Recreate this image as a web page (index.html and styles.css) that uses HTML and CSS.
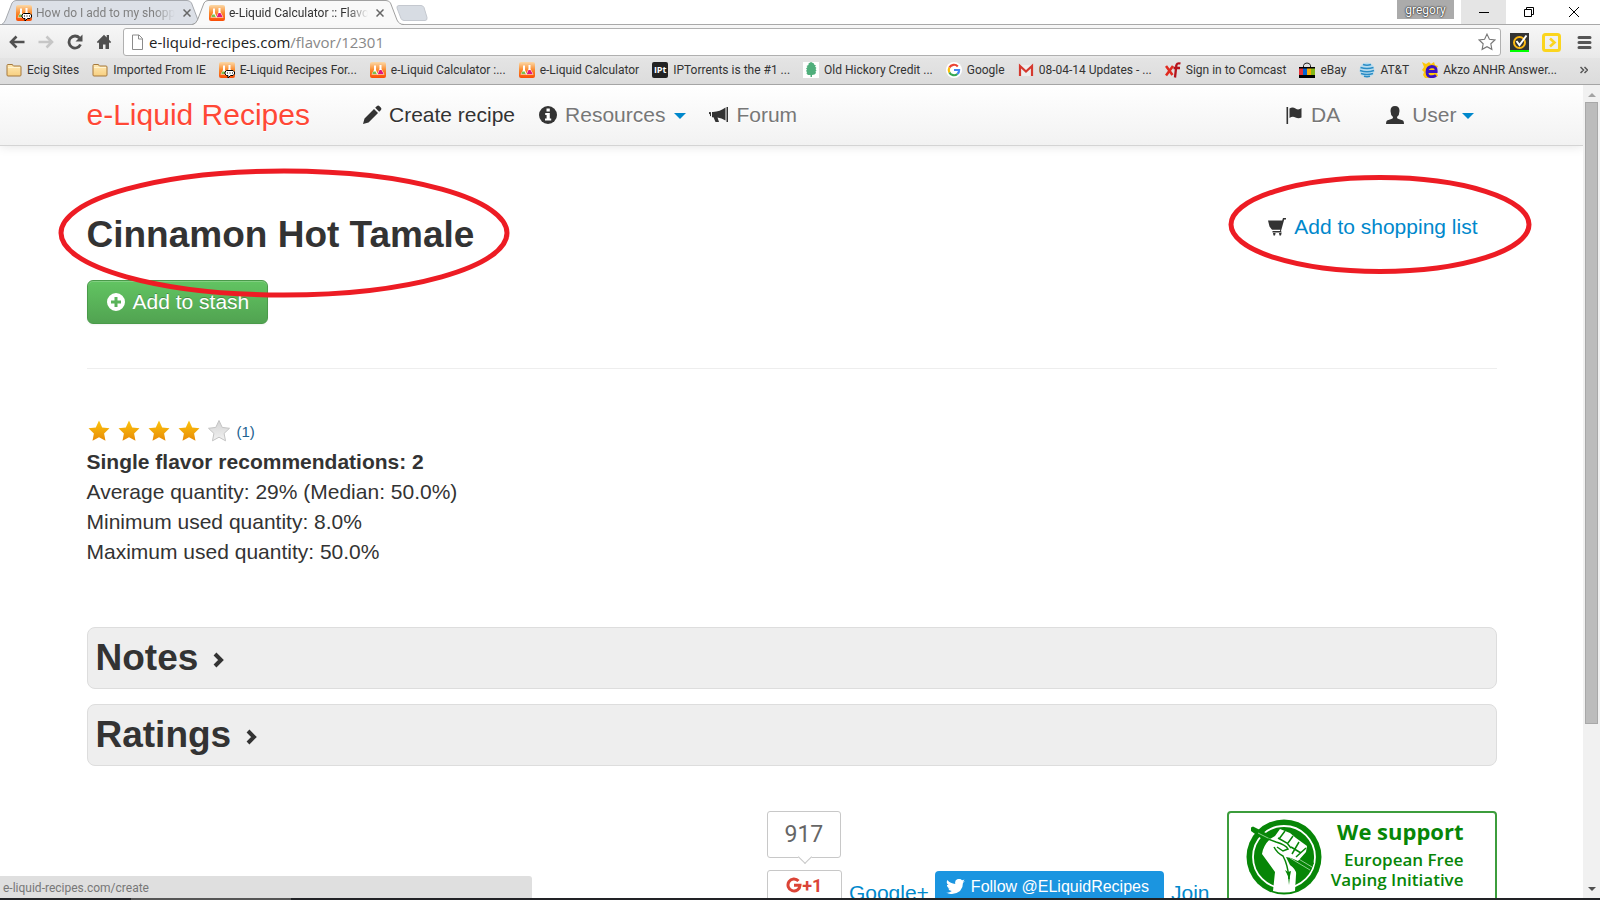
FILE: index.html
```html
<!DOCTYPE html>
<html lang="en">
<head>
<meta charset="utf-8">
<title>e-Liquid Calculator :: Flavor</title>
<link rel="stylesheet" href="styles.css">
</head>
<body>
<svg class="defs" aria-hidden="true">
  <defs>
    <linearGradient id="orange" x1="0" y1="0" x2="0" y2="1"><stop offset="0" stop-color="#fbd9a8"/><stop offset=".5" stop-color="#fb8a2c"/><stop offset="1" stop-color="#fa4d06"/></linearGradient>
    <linearGradient id="gold" x1="0" y1="0" x2="0" y2="1"><stop offset="0" stop-color="#fcc40c"/><stop offset="1" stop-color="#e88b08"/></linearGradient>
    <linearGradient id="silver" x1="0" y1="0" x2="0" y2="1"><stop offset="0" stop-color="#d4d4d4"/><stop offset="1" stop-color="#f2f2f2"/></linearGradient>
    <linearGradient id="paper" x1="0" y1="0" x2="0" y2="1"><stop offset="0" stop-color="#ffe9b4"/><stop offset="1" stop-color="#f7cf80"/></linearGradient>
  </defs>
  <symbol id="flask" viewBox="0 0 16 16">
    <rect width="16" height="16" rx="2" fill="url(#orange)"/>
    <path d="M4 3.500h2v4.500l2 4.500H1.500L4 8z" fill="#fff"/><path d="M3.200 9.500h2.500l1 2.500H2.300z" fill="#7cc04c"/>
    <path d="M9.500 3h2v4l3 5.500H7L9.500 7z" fill="#fff"/><path d="M9.500 8h2l2.200 4H7.800z" fill="#e0187c"/>
  </symbol>
  <symbol id="flask-talk" viewBox="0 0 16 16">
    <use href="#flask"/>
    <path d="M7.500 8.500h6.500l1.500 1.500v2l-1.500 1.500h-2.500L9 16v-2.500H7.500L6 12v-2z" fill="#fff" stroke="#000"/>
    <path d="M8 11h1M10.500 11h1M13 11h1" stroke="#000"/>
  </symbol>
  <symbol id="folder" viewBox="0 0 16 16">
    <path d="M1 13V3.500q0-1 1-1h4q1 0 1 1l.5.500H14q1 0 1 1v8q0 1-1 1H2q-1 0-1-1z" fill="url(#paper)" stroke="#a5793c"/>
    <path d="M2 5.500h12" stroke="#fff3cf"/>
  </symbol>
  <symbol id="star" viewBox="0 0 24 24">
    <path d="M12 1.500l3.200 6.900 7.300.9-5.400 5.100 1.400 7.400-6.500-3.600-6.500 3.600 1.400-7.400L1.500 9.300l7.300-.9z"/>
  </symbol>
</svg>

<header class="browser">
  <div class="tabstrip">
    <div class="tab tab-back">
      <svg class="tab-shape" viewBox="0 0 202 25" preserveAspectRatio="none"><path d="M1.500 24.500Q4 23.500 5.500 20L12 3Q13.500.5 16 .5H187Q190 .5 191.500 3L198 20Q199 24 202 24.500z" fill="#dce0e7" stroke="#a6a9ae"/></svg>
      <svg class="i16"><use href="#flask-talk"/></svg>
      <span class="tab-title">How do I add to my shopp</span>
      <button class="tab-close" aria-label="Close tab"><svg viewBox="0 0 8 8"><path d="M.5.5l7 7M7.500.5l-7 7"/></svg></button>
    </div>
    <div class="tab tab-front">
      <svg class="tab-shape" viewBox="0 0 212 25" preserveAspectRatio="none"><path d="M0 25Q4 24.500 5.500 20L12 3Q13.500.5 16 .5H194Q197 .5 198.500 3L205 20Q207 24.500 212 25z" fill="#f9f9f9"/><path d="M0 24.500Q4 24 5.500 20L12 3Q13.500.5 16 .5H194Q197 .5 198.500 3L205 20Q207 24.500 212 24.500" fill="none" stroke="#a0a0a0"/></svg>
      <svg class="i16"><use href="#flask"/></svg>
      <span class="tab-title">e-Liquid Calculator :: Flavo</span>
      <button class="tab-close" aria-label="Close tab"><svg viewBox="0 0 8 8"><path d="M.5.5l7 7M7.500.5l-7 7"/></svg></button>
    </div>
    <button class="newtab" aria-label="New tab"><svg viewBox="0 0 32 16"><path d="M3 .5h22q2 0 3 2l3 10q.5 3-2 3H8q-2 0-3-2L1 3Q.5.5 3 .5z" fill="#d7dce3" stroke="#c4c8cf"/></svg></button>
    <div class="window-controls">
      <button class="profile">gregory</button>
      <button class="win win-min" aria-label="Minimize"><svg viewBox="0 0 10 10"><path d="M0 5.500h10"/></svg></button>
      <button class="win" aria-label="Restore"><svg viewBox="0 0 10 10"><path d="M.5 2.500h7v7h-7zM2.500 2.500v-2h7v7h-2"/></svg></button>
      <button class="win" aria-label="Close"><svg viewBox="0 0 10 10"><path d="M0 0l10 10M10 0L0 10"/></svg></button>
    </div>
  </div>

  <div class="toolbar">
    <button class="tool" aria-label="Back"><svg viewBox="0 0 16 16"><path d="M15.500 8H2M7.500 2.500L2 8l5.500 5.500" stroke="#505050" stroke-width="2.600" fill="none"/></svg></button>
    <button class="tool" aria-label="Forward"><svg viewBox="0 0 16 16"><path d="M.5 8H14M8.500 2.500L14 8l-5.500 5.500" stroke="#c6c6c6" stroke-width="2.600" fill="none"/></svg></button>
    <button class="tool" aria-label="Reload"><svg viewBox="0 0 16 16"><path d="M13.500 10.500A6 6 0 1 1 12.500 4" stroke="#505050" stroke-width="2.800" fill="none"/><path d="M15.500.5v7h-7z" fill="#505050"/></svg></button>
    <button class="tool" aria-label="Home"><svg viewBox="0 0 16 16"><path d="M8 .8L.8 8l1.200 1.200L3 8.300V15h4v-4.500h2.500V15H13V8.300l1 .9L15.200 8 13 5.800V1h-2.300v2.500z" fill="#505050"/></svg></button>
    <div class="omnibox">
      <svg class="i16 page-icon" viewBox="0 0 16 16"><path d="M3.500 1h6.500l3.500 3.500V15.500H3.500zM9.500 1v4h4" fill="#fff" stroke="#8b8b8b"/></svg>
      <div class="url" role="textbox" aria-label="Address">e-liquid-recipes.com<span class="path">/flavor/12301</span></div>
      <button class="fav" aria-label="Bookmark this page"><svg viewBox="0 0 24 24"><use href="#star"/></svg></button>
    </div>
    <button class="ext" aria-label="Safety extension"><svg viewBox="0 0 19 19"><path d="M0 0h19v17H0z" fill="#333"/><path d="M0 17h19v2H0z" fill="#0f0"/><circle cx="9.500" cy="9.500" r="5.500" fill="none" stroke="#fdb913" stroke-width="2"/><path d="M6.500 8l3 4L16.500 2.500" fill="none" stroke="#fff" stroke-width="2"/></svg></button>
    <button class="ext ext-yellow" aria-label="Toolbar extension"><svg viewBox="0 0 19 19"><rect x="1.500" y="1.500" width="16" height="16" rx="2" fill="none" stroke="#fbd51e" stroke-width="3"/><path d="M8 5.500l4.500 4-4.500 4" fill="none" stroke="#fbd51e" stroke-width="2.600"/></svg></button>
    <button class="ext" aria-label="Menu"><svg viewBox="0 0 19 19"><path d="M5 4.500h11M5 9.500h11M5 14.500h11" stroke="#555" stroke-width="3" stroke-linecap="round"/></svg></button>
  </div>

  <nav class="bookmarks" aria-label="Bookmarks">
    <a href="#"><svg class="i16"><use href="#folder"/></svg>Ecig Sites</a>
    <a href="#"><svg class="i16"><use href="#folder"/></svg>Imported From IE</a>
    <a href="#"><svg class="i16"><use href="#flask-talk"/></svg>E-Liquid Recipes For...</a>
    <a href="#"><svg class="i16"><use href="#flask"/></svg>e-Liquid Calculator :...</a>
    <a href="#"><svg class="i16"><use href="#flask"/></svg>e-Liquid Calculator</a>
    <a href="#"><span class="ipt">IPt</span>IPTorrents is the #1 ...</a>
    <a href="#"><svg class="i16" viewBox="0 0 16 16"><path d="M0 0h16v16H0z" fill="#fff"/><path d="M8 0l3 1.500v1l2 1-1 1 1.500 1.500-1 1 1 1.500-1 1 .5 1.500-1.500 1.500-2.500.5v2H7.500v-2L5 13l-1.500-1.500.5-1.500-1-1 1-1.500-1-1L4.500 5l-1-1 2-1v-1.500z" fill="#4fae7b"/></svg>Old Hickory Credit ...</a>
    <a href="#"><svg class="i16" viewBox="0 0 16 16"><circle cx="8" cy="8" r="8" fill="#fff"/><g fill="none" stroke-width="2.200"><path d="M11.800 4.400A5.200 5.200 0 0 0 3.400 5.600" stroke="#ea4335"/><path d="M3.400 5.600a5.200 5.200 0 0 0 0 4.800" stroke="#fbbc05"/><path d="M3.400 10.400a5.200 5.200 0 0 0 8 1.600" stroke="#34a853"/><path d="M11.400 12a5 5 0 0 0 1.700-4H8" stroke="#4285f4"/></g></svg>Google</a>
    <a href="#"><svg class="i16" viewBox="0 0 16 16"><path d="M1 3h14v11H1z" fill="#eee"/><path d="M2 14V4l6 5.500L14 4v10" fill="none" stroke="#d5392f" stroke-width="2.200"/></svg>08-04-14 Updates - ...</a>
    <a href="#"><svg class="i16" viewBox="0 0 16 16"><path d="M1 4l6.500 9M8 4L1 13.500" stroke="#e02b20" stroke-width="2.600"/><path d="M15.500 1.500q-4-1-4.200 2.500l-1.300 11.500M8.500 6h6.500" stroke="#b5121b" stroke-width="2.300" fill="none"/></svg>Sign in to Comcast</a>
    <a href="#"><svg class="i16" viewBox="0 0 16 16"><path d="M4.500 6V3.500Q5 1 8 1t3.500 2.500V6" fill="none" stroke="#222"/><path d="M0 5h16v11H0z"/><path d="M0 6.500h4v6.500H0z" fill="#e53238"/><path d="M4 6.500h4v6.500H4z" fill="#0064d2"/><path d="M8 6.500h4v6.500H8z" fill="#f5af02"/><path d="M12 6.500h4v6.500h-4z" fill="#86b817"/></svg>eBay</a>
    <a href="#"><svg class="i16" viewBox="0 0 16 16"><circle cx="8" cy="8" r="7.500" fill="#b9dcef"/><path d="M4 2.500q4 1.500 8 0M1.500 5.500q6.500 2 13 0M1 8.500q7 2.500 14 0M2 11.500q6 2 12 0M5 14.300q3 .7 6 0" fill="none" stroke="#2a8cc4" stroke-width="1.500"/></svg>AT&amp;T</a>
    <a href="#"><svg class="i16" viewBox="0 0 16 16"><path d="M0 0l4 2 3-2 2 2 3-2 1 3 3 1-2 4 2 6-5 2H3l-2-3 1-3-2-2 2-3z" fill="#fdc70c"/><path d="M5 9.500h9.200Q14.500 4.500 9.800 4.500 5 5 5 10t5 4.700q2.500 0 4-1.500" fill="none" stroke="#3b12c4" stroke-width="2.800"/></svg>Akzo ANHR Answer...</a>
    <button class="more" aria-label="More bookmarks"><svg viewBox="0 0 8 8"><path d="M.5 1l3 3-3 3M4.500 1l3 3-3 3"/></svg></button>
  </nav>
</header>

<div class="viewport">
  <div class="page">
    <div class="navbar">
      <div class="container nav-row">
        <a class="brand" href="#">e-Liquid Recipes</a>
        <a class="nav-link active" href="#"><svg class="glyph" viewBox="0 0 20 20"><path d="M1 19l1.500-5.500L12 4l4 4-9.500 9.500zM13.200 2.800L15 1q1.300-1 2.500.2L18.800 2.500q1.200 1.200.2 2.500L17.200 6.800z"/></svg>Create recipe</a>
        <a class="nav-link" href="#"><svg class="glyph" viewBox="0 0 20 20"><circle cx="10" cy="10" r="9"/><path d="M8.500 3.500h3.300v3H8.500zM7.200 8h4.600v5.500h1.400v2H7v-2h1.600V10H7.200z" fill="#fff"/></svg>Resources<span class="caret"></span></a>
        <a class="nav-link" href="#"><svg class="glyph" viewBox="0 0 20 20"><path d="M17.500 2h1.500v15h-1.500zM4 7q7-.5 12.500-4.500v13Q12.500 13 8.500 12.500L10 17H6.500L4.500 12.300H3V7zM0 7l2 .3v4L1 11V9.200L0 9z"/></svg>Forum</a>
        <a class="nav-link push" href="#"><svg class="glyph" viewBox="0 0 20 20"><path d="M2.500 2h1.600v17H2.500zM5.500 3.500q3-2 6 0t6-.5v9.500q-3 1.500-6 0t-6 .5z"/></svg>DA</a>
        <a class="nav-link user" href="#"><svg class="glyph" viewBox="0 0 20 20"><path d="M10 1q4.500 0 4.500 5 0 4-2.500 6 0 1.500 1 1.800l5 1.700q1 .5 1 3.500H1q0-3 1-3.500l5-1.700q1-.3 1-1.800-2.500-2-2.500-6 0-5 4.500-5z"/></svg>User<span class="caret caret-near"></span></a>
      </div>
    </div>

    <main class="container">
      <div class="headline">
        <div>
          <h1>Cinnamon Hot Tamale</h1>
          <button class="stash"><svg class="glyph" viewBox="0 0 20 20"><path fill-rule="evenodd" d="M10 1a9 9 0 1 0 0 18 9 9 0 1 0 0-18zM8.500 5h3v3.500H15v3h-3.500V15h-3v-3.500H5v-3h3.500z"/></svg>Add to stash</button>
        </div>
        <a class="shopping" href="#"><svg class="glyph" viewBox="0 0 20 20"><path d="M1 3.500h14.200L16 1h3v1.600h-1.800L14 14l.8 1.400H5.500V14H13l.3-1.200H5L2.500 9.500zM6 16h2.600l-.6 2.500H6.500zM12 16h2.600l-.6 2.500h-1.500z"/></svg>Add to shopping list</a>
        <svg class="ring ring-title" aria-hidden="true"><ellipse cx="50%" cy="50%" rx="223" ry="62"/></svg>
        <svg class="ring ring-shopping" aria-hidden="true"><ellipse cx="50%" cy="50%" rx="149" ry="47"/></svg>
      </div>
      <hr>
      <section class="stats">
        <div class="rating">
          <svg class="rate"><use href="#star"/></svg><svg class="rate"><use href="#star"/></svg><svg class="rate"><use href="#star"/></svg><svg class="rate"><use href="#star"/></svg><svg class="rate rate-off"><use href="#star"/></svg>
          <span class="votes">(1)</span>
        </div>
        <p><strong>Single flavor recommendations: 2</strong></p>
        <p>Average quantity: 29% (Median: 50.0%)</p>
        <p>Minimum used quantity: 8.0%</p>
        <p>Maximum used quantity: 50.0%</p>
      </section>
      <button class="panel">Notes<svg viewBox="0 0 12 18"><path d="M2 3l6 6-6 6" /></svg></button>
      <button class="panel">Ratings<svg viewBox="0 0 12 18"><path d="M2 3l6 6-6 6" /></svg></button>

      <footer class="footer">
        <div class="plus">
          <div class="count">917</div>
          <button class="plusone"><svg viewBox="0 0 30 16" aria-hidden="true"><path d="M12.500 4A6 6 0 1 0 14 8.300H8" fill="none" stroke="#db4437" stroke-width="3"/></svg><span>+1</span></button>
        </div>
        <a class="foot-link" href="#">Google+</a>
        <a class="follow" href="#"><svg viewBox="0 0 20 16"><path d="M20 2q-1 .6-2.300.7Q19 2 19.500.4q-1.200.7-2.600 1A4.100 4.100 0 0 0 9.800 5.200Q4.500 5 1.400 1A4.100 4.100 0 0 0 2.600 6.500Q1.600 6.500.8 6q0 3 3.200 4-.9.300-1.800.1.700 2.500 3.800 2.800Q3.300 15 0 14.500q3 1.700 6.300 1.500Q18 15 18 4.100 19.200 3.300 20 2z"/></svg>Follow @ELiquidRecipes</a>
        <a class="foot-link" href="#">Join</a>
        <a class="badge" href="#">
          <svg viewBox="0 0 76 76" aria-hidden="true"><circle cx="38" cy="38" r="37.500" fill="#078607"/><circle cx="38" cy="38" r="31" fill="none" stroke="#fff" stroke-width="1.800"/><path d="M5 8.500L7 7.500 32 20 68 44 64 53 38 36 5 12z" fill="#078607"/><path d="M12 14l16 8M46 36l20 12M44 39l20 12" stroke="#8fce8f" stroke-width="1"/><path d="M27 72L29 53 16 35Q17 27 24 20L29 17 34 10 44 14 50 19 61 27 60 33 52 42 45 39 40 38 44 46Q51 51 50 56L49 72Q38 75 27 72z" fill="#fff"/><path d="M28 28Q31 34 37 37 42 46 43 60M22 20L30 23Q40 26 42 30L37 32 31 28M32 19L41 24 45 29M33 20L39 12M42 24L47 17M45 28L55 34M46 35L53 23M50 38L60 29" fill="none" stroke="#078607" stroke-width="1.500"/><path d="M39 51l3 2 3-1-1 5-1 9-1-9z" fill="#078607"/></svg>
          <span class="badge-text"><b>We support</b><span>European Free</span><span>Vaping Initiative</span></span>
        </a>
      </footer>
    </main>
  </div>
  <div class="scrollbar" aria-hidden="true"><i class="arrow up"></i><i class="thumb"></i><i class="arrow down"></i></div>
  <div class="status">e-liquid-recipes.com/create</div>
</div>
<div class="taskbar"></div>
</body>
</html>
```
FILE: styles.css
```css
* { box-sizing: border-box; }
html, body { height: 100%; }
body { margin: 0; display: flex; flex-direction: column; overflow: hidden; background: #fff; color: #333; font: 21px/30px "Liberation Sans", Arial, sans-serif; }
button { margin: 0; padding: 0; border: 0; background: none; font: inherit; color: inherit; cursor: pointer; }
a { color: #0088cc; text-decoration: none; }
svg { display: block; flex: none; }
.defs { position: absolute; width: 0; height: 0; }
.i16 { width: 16px; height: 16px; flex: none; }

.browser { flex: none; font: 12px/16px Roboto, sans-serif; color: #333; }
.tabstrip { display: flex; height: 25px; background: linear-gradient(#fff 24px, #a9a9a9 24px); }
.tab { position: relative; display: flex; align-items: center; height: 25px; padding: 1px 7px 0 16px; gap: 4px; }
.tab > * { position: relative; }
.tab .tab-shape { position: absolute; left: 0; top: 0; width: 100%; height: 25px; }
.tab-back { width: 202px; color: #808080; }
.tab-front { width: 212px; margin-left: -10px; padding: 1px 16px 0 17px; z-index: 1; }
.tab-title { flex: 1; min-width: 0; overflow: hidden; white-space: nowrap; -webkit-mask-image: linear-gradient(90deg, #000 85%, transparent); mask-image: linear-gradient(90deg, #000 85%, transparent); }
.tab-close { width: 16px; height: 16px; padding: 4px; }
.tab-close svg { width: 8px; height: 8px; stroke: #666; stroke-width: 1.500; }
.newtab { margin: 5px 0 0 -8px; width: 32px; height: 16px; z-index: 1; }
.window-controls { display: flex; margin: 0 4px 0 auto; height: 24px; }
.profile { width: 57px; height: 19px; margin-right: 7px; background: #ababab; color: #fff; line-height: 18px; text-shadow: 0 0 2px #000, 0 0 1px #333; }
.win { display: flex; align-items: center; justify-content: center; width: 45px; height: 24px; }
.win-min { background: #e5e5e5; }
.win svg { width: 10px; height: 10px; fill: none; stroke: #000; }

.toolbar { display: flex; align-items: center; height: 33px; padding: 1px 7px 0 9px; background: linear-gradient(#f7f7f7, #e9e9e9); }
.tool { width: 16px; height: 16px; margin-right: 13px; }
.tool:nth-child(4) { margin-right: 11px; }
.omnibox { flex: 1; display: flex; align-items: center; height: 28px; padding: 0 4px 0 5px; border: 1px solid #b0b0b0; border-radius: 3px; background: #fff; }
.url { flex: 1; padding-left: 4px; font: 15px/24px "Open Sans", sans-serif; color: #222; }
.path { color: #888; }
.fav { width: 18px; height: 18px; }
.fav svg { fill: none; stroke: #777; stroke-width: 1.500; }
.ext { width: 19px; height: 19px; margin-left: 9px; }
.ext-yellow { margin-left: 13px; margin-right: 4px; }

.bookmarks { display: flex; align-items: center; height: 27px; padding: 0 12px 2px 6px; gap: 13px; background: linear-gradient(#e4e4e4, #dcdcdc); border-bottom: 1px solid #a5a5a5; }
.bookmarks a { display: flex; align-items: center; gap: 5px; white-space: nowrap; color: #333; }
.ipt { width: 16px; height: 16px; border-radius: 2px; background: #222; color: #fff; font: bold 9px/16px "Open Sans", sans-serif; text-align: center; }
.more { width: 8px; height: 8px; margin-left: auto; }
.more svg { fill: none; stroke: #555; stroke-width: 1.500; }

.viewport { position: relative; flex: 1; min-height: 0; display: flex; }
.page { flex: 1; min-width: 0; overflow: hidden; }
.container { max-width: 1410px; margin: 0 auto; }
.navbar { height: 61px; background: linear-gradient(#fff, #f2f2f2); border-bottom: 1px solid #d4d4d4; box-shadow: 0 1px 10px rgba(0, 0, 0, .1); }
.nav-row { display: flex; align-items: center; height: 60px; }
.brand { font-size: 30px; color: #ff4836; text-shadow: 0 1px 0 #fff; margin-right: 52px; }
.nav-link { display: flex; align-items: center; color: #777; text-shadow: 0 1px 0 #fff; margin-right: 23px; }
.nav-link.active { color: #333; }
.glyph { width: 20px; height: 20px; margin-right: 7px; fill: #333; }
.push { margin-left: auto; margin-right: 45px; }
.caret { margin: 1px 0 0 9px; border: 6px solid transparent; border-top-color: #0088cc; border-bottom: 0; }
.caret-near { margin-left: 5px; }

.headline { position: relative; display: flex; justify-content: space-between; align-items: flex-start; padding-top: 58px; }
h1 { margin: 0; font-size: 37px; line-height: 62px; }
.stash { display: flex; align-items: center; height: 44px; margin-top: 14px; padding: 0 18px; border: 1px solid #4a9a4a; border-radius: 6px; background: linear-gradient(#62c462, #51a351); box-shadow: inset 0 1px 0 rgba(255, 255, 255, .2), 0 1px 2px rgba(0, 0, 0, .05); color: #fff; text-shadow: 0 -1px 0 rgba(0, 0, 0, .25); }
.stash .glyph { fill: #fff; }
.shopping { display: flex; align-items: center; margin: 8px 19px 0 0; }
.ring { position: absolute; fill: none; stroke: #ed1c24; stroke-width: 5; pointer-events: none; }
.ring-title { left: -29px; top: 22px; width: 452px; height: 130px; }
.ring-shopping { right: -35px; top: 29px; width: 304px; height: 99px; }
hr { margin: 44px 0 46px; border: 0; border-top: 1px solid #eee; }
.stats { margin-bottom: 60px; }
.stats p { margin: 0; }
.rating { display: flex; align-items: center; height: 32px; gap: 6px; }
.rate { width: 24px; height: 24px; fill: url(#gold); }
.rate-off { fill: url(#silver); stroke: #c4c4c4; }
.votes { font-size: 15px; padding-top: 2px; color: #1c6290; }
.panel { display: flex; align-items: center; width: 100%; height: 62px; margin-bottom: 15px; padding: 0 8px; border: 1px solid #ddd; border-radius: 8px; background: #eee; font-size: 37px; font-weight: bold; line-height: 60px; }
.panel svg { width: 12px; height: 18px; margin: 4px 0 0 15px; fill: none; stroke: #333; stroke-width: 4; }

.footer { display: flex; justify-content: flex-end; align-items: flex-start; padding-top: 30px; }
.plus { width: 75px; }
.count { position: relative; width: 74px; height: 47px; border: 1px solid #c8c8c8; border-radius: 3px; text-align: center; font: 23px/45px Roboto, sans-serif; color: #666; }
.count::after { content: ""; position: absolute; left: 32px; bottom: -5px; width: 9px; height: 9px; border: solid #c8c8c8; border-width: 0 1px 1px 0; background: #fff; transform: rotate(45deg); }
.plusone { display: flex; justify-content: center; width: 75px; height: 36px; margin-top: 12px; padding-top: 6px; border: 1px solid #c8c8c8; border-radius: 3px; color: #db4437; font: bold 18px/18px Roboto, sans-serif; }
.plusone svg { width: 30px; height: 16px; margin-right: -14px; }
.foot-link { margin: 67px 0 0 7px; }
.follow { display: flex; align-items: center; height: 31px; margin: 60px 0 0 6px; padding: 0 15px 0 11px; border-radius: 4px; background: #1b95e0; color: #fff; font-size: 16px; }
.follow svg { width: 19px; height: 15px; margin-right: 6px; fill: #fff; }
.badge { display: flex; justify-content: space-between; width: 270px; height: 100px; margin-left: 17px; padding: 6px 31px 0 17px; border: 2px solid #3c9d3c; border-radius: 4px; color: #078607; }
.badge svg { width: 76px; height: 76px; }
.badge-text { display: flex; flex-direction: column; align-items: flex-end; font: 600 17px/20px "Open Sans", sans-serif; white-space: nowrap; }
.badge-text b { font-size: 22px; line-height: 24px; margin-bottom: 7px; font-weight: 700; }

.scrollbar { flex: none; display: flex; flex-direction: column; align-items: center; width: 17px; background: #f1f1f1; }
.arrow { border: 4px solid transparent; }
.up { margin: 8px 0 5px; border-top: 0; border-bottom-color: #a3a3a3; }
.down { margin: auto 0 7px; border-bottom: 0; border-top-color: #505050; }
.thumb { flex: none; width: 13px; height: calc(77% - 4px); border: 1px solid #a8a8a8; background: #bcbcbc; }
.status { position: absolute; left: 0; bottom: 0; width: 532px; height: 22px; padding-left: 3px; border-radius: 0 3px 0 0; background: #dfdfdf; color: #777; font: 12px/24px Roboto, sans-serif; }
.taskbar { flex: none; height: 2px; background: linear-gradient(90deg, #222326 131px, #555 131px, #555 291px, #222326 291px); }
```
